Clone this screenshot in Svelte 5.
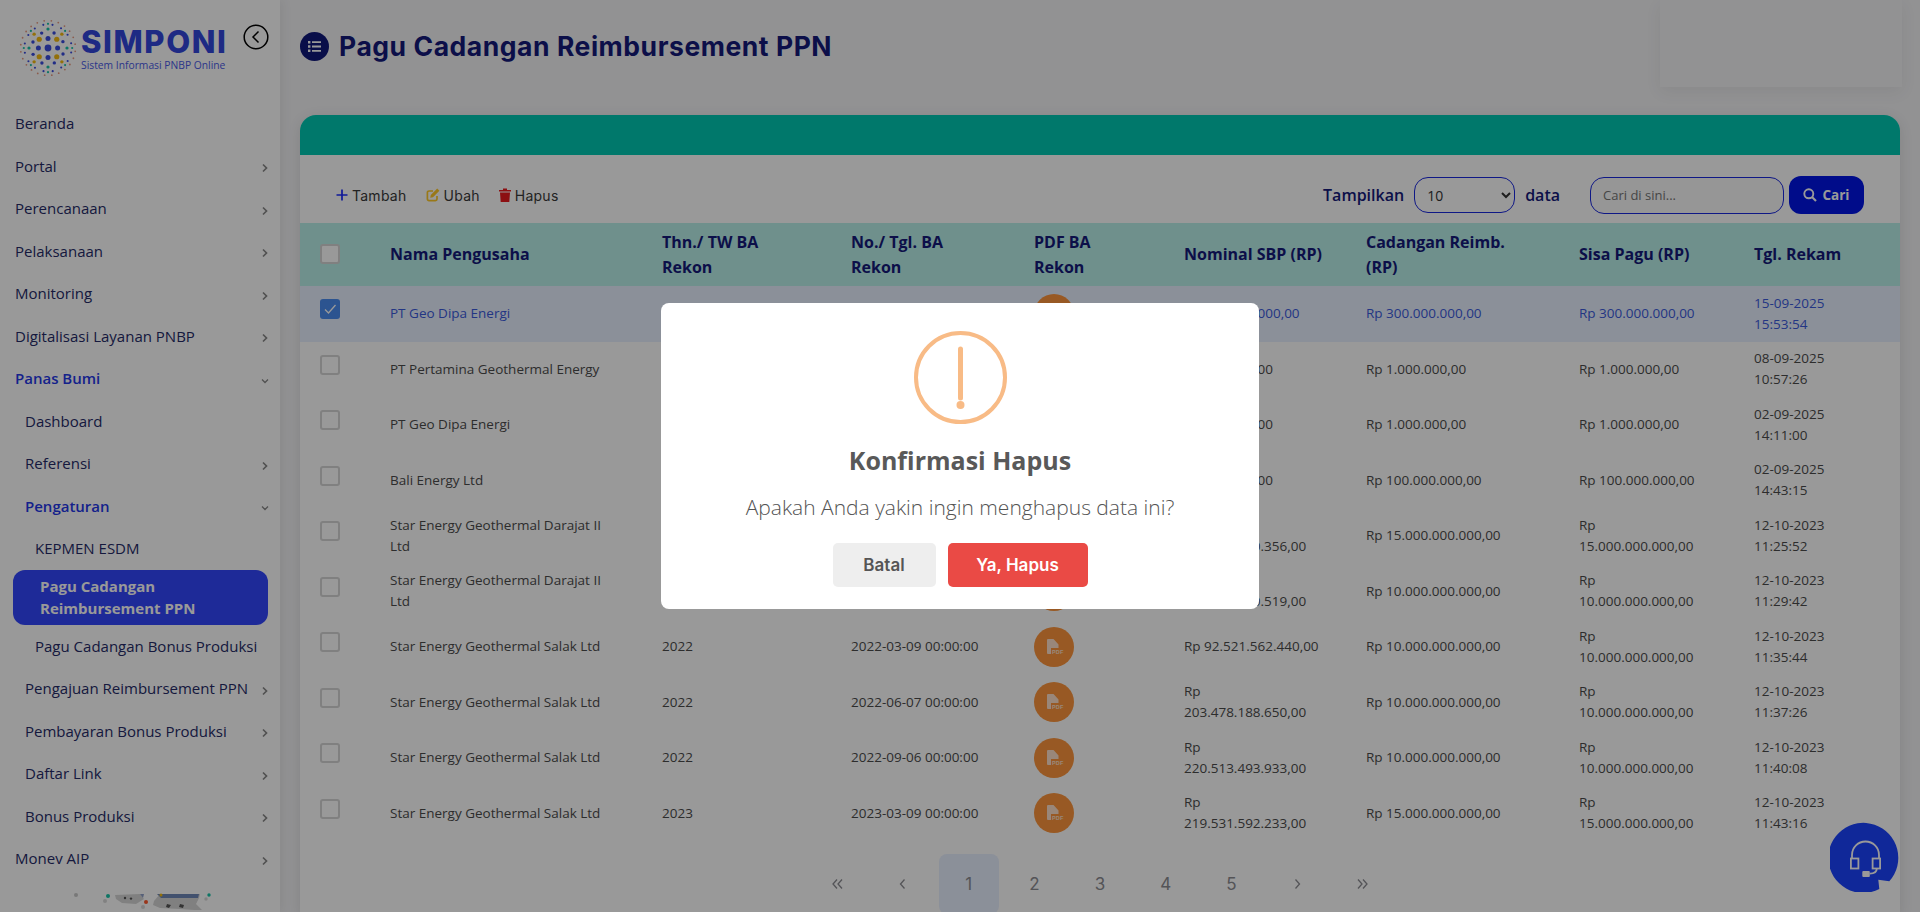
<script>
  const nav = [
    { label: 'Beranda', level: 0 },
    { label: 'Portal', level: 0, arrow: 'right' },
    { label: 'Perencanaan', level: 0, arrow: 'right' },
    { label: 'Pelaksanaan', level: 0, arrow: 'right' },
    { label: 'Monitoring', level: 0, arrow: 'right' },
    { label: 'Digitalisasi Layanan PNBP', level: 0, arrow: 'right' },
    { label: 'Panas Bumi', level: 0, arrow: 'down', open: true },
    { label: 'Dashboard', level: 1 },
    { label: 'Referensi', level: 1, arrow: 'right' },
    { label: 'Pengaturan', level: 1, arrow: 'down', open: true },
    { label: 'KEPMEN ESDM', level: 2 },
    { label: 'Pagu Cadangan Reimbursement PPN', level: 2, active: true },
    { label: 'Pagu Cadangan Bonus Produksi', level: 2 },
    { label: 'Pengajuan Reimbursement PPN', level: 1, arrow: 'right' },
    { label: 'Pembayaran Bonus Produksi', level: 1, arrow: 'right' },
    { label: 'Daftar Link', level: 1, arrow: 'right' },
    { label: 'Bonus Produksi', level: 1, arrow: 'right' },
    { label: 'Monev AIP', level: 0, arrow: 'right' }
  ];

  const rows = [
    { name: 'PT Geo Dipa Energi', thn: '2025', no: '2025-09-15 00:00:00', nominal: 'Rp 300.000.000,00', cad: 'Rp 300.000.000,00', sisa: 'Rp 300.000.000,00', tgl: '15-09-2025 15:53:54', selected: true },
    { name: 'PT Pertamina Geothermal Energy', thn: '2025', no: '2025-09-08 00:00:00', nominal: 'Rp 100.000,00', cad: 'Rp 1.000.000,00', sisa: 'Rp 1.000.000,00', tgl: '08-09-2025 10:57:26' },
    { name: 'PT Geo Dipa Energi', thn: '2025', no: '2025-09-02 00:00:00', nominal: 'Rp 100.000,00', cad: 'Rp 1.000.000,00', sisa: 'Rp 1.000.000,00', tgl: '02-09-2025 14:11:00' },
    { name: 'Bali Energy Ltd', thn: '2025', no: '2025-09-02 00:00:00', nominal: 'Rp 100.000,00', cad: 'Rp 100.000.000,00', sisa: 'Rp 100.000.000,00', tgl: '02-09-2025 14:43:15' },
    { name: 'Star Energy Geothermal Darajat II Ltd', thn: '2022', no: '2022-03-09 00:00:00', nominal: 'Rp 120.000.000.356,00', cad: 'Rp 15.000.000.000,00', sisa: 'Rp 15.000.000.000,00', tgl: '12-10-2023 11:25:52' },
    { name: 'Star Energy Geothermal Darajat II Ltd', thn: '2022', no: '2022-06-07 00:00:00', nominal: 'Rp 110.000.000.519,00', cad: 'Rp 10.000.000.000,00', sisa: 'Rp 10.000.000.000,00', tgl: '12-10-2023 11:29:42' },
    { name: 'Star Energy Geothermal Salak Ltd', thn: '2022', no: '2022-03-09 00:00:00', nominal: 'Rp 92.521.562.440,00', cad: 'Rp 10.000.000.000,00', sisa: 'Rp 10.000.000.000,00', tgl: '12-10-2023 11:35:44' },
    { name: 'Star Energy Geothermal Salak Ltd', thn: '2022', no: '2022-06-07 00:00:00', nominal: 'Rp 203.478.188.650,00', cad: 'Rp 10.000.000.000,00', sisa: 'Rp 10.000.000.000,00', tgl: '12-10-2023 11:37:26' },
    { name: 'Star Energy Geothermal Salak Ltd', thn: '2022', no: '2022-09-06 00:00:00', nominal: 'Rp 220.513.493.933,00', cad: 'Rp 10.000.000.000,00', sisa: 'Rp 10.000.000.000,00', tgl: '12-10-2023 11:40:08' },
    { name: 'Star Energy Geothermal Salak Ltd', thn: '2023', no: '2023-03-09 00:00:00', nominal: 'Rp 219.531.592.233,00', cad: 'Rp 15.000.000.000,00', sisa: 'Rp 15.000.000.000,00', tgl: '12-10-2023 11:43:16' }
  ];

  const pages = ['first', 'prev', '1', '2', '3', '4', '5', 'next', 'last'];
  const arrows = {
    first: 'M7 2.500 3 7l4 4.500M12 2.500 8 7l4 4.500',
    prev: 'M8.500 2.500 4.500 7l4 4.500',
    next: 'M5.500 2.500 9.500 7l-4 4.500',
    last: 'M2 2.500 6 7l-4 4.500M7 2.500 11 7l-4 4.500'
  };

  // logo dots, ring by ring from the middle out
  const rings = [
    { n: 1, d: 0, r: 3.4, c: '#3a4be0', a: 0 },
    { n: 4, d: 9.6, r: 2.5, c: '#3a4be0', a: 0 },
    { n: 4, d: 12.4, r: 2.6, c: '#f5bb10', a: 45 },
    { n: 8, d: 16.2, r: 1.7, c: '#3a4be0', a: 22 },
    { n: 4, d: 19, r: 1.6, c: '#18c4a8', a: 0 },
    { n: 4, d: 19.6, r: 1.7, c: '#f5bb10', a: 45 },
    { n: 16, d: 23.6, r: 1.05, c: '#3a4be0', a: 11 },
    { n: 8, d: 24.2, r: 1.1, c: '#18c4a8', a: 0 },
    { n: 24, d: 27.4, r: 0.9, c: '#e89a80', a: 7 }
  ];
  const dots = rings.flatMap((ring) =>
    Array.from({ length: ring.n }, (_, i) => {
      const t = ((ring.a + (i * 360) / ring.n) * Math.PI) / 180;
      return { x: 30 + ring.d * Math.cos(t), y: 30 + ring.d * Math.sin(t), r: ring.r, c: ring.c };
    })
  );
</script>

<div class="shell">
  <aside>
    <div class="brand">
      <svg class="mark" viewBox="0 0 60 60" width="60" height="60">
        {#each dots as dot}
          <circle cx={dot.x} cy={dot.y} r={dot.r} fill={dot.c} />
        {/each}
      </svg>
      <div class="brand-text">
        <strong>SIMPONI</strong>
        <span>Sistem Informasi PNBP Online</span>
      </div>
      <svg class="back" viewBox="0 0 26 26" width="26" height="26">
        <circle cx="13" cy="13" r="11.800" fill="none" stroke="#000" stroke-width="1.500" />
        <path d="M15.500 7.500 10 13l5.500 5.500" fill="none" stroke="#000" stroke-width="1.500" />
      </svg>
    </div>

    <nav>
      {#each nav as item}
        <div class="item lv{item.level}" class:open={item.open} class:active={item.active}>
          <span>{item.label}</span>
          {#if item.arrow === 'right'}
            <svg class="arrow" viewBox="0 0 8 10" width="8" height="10"><path d="M2 1.500 5.500 5 2 8.500" fill="none" stroke="currentColor" stroke-width="1.700" /></svg>
          {:else if item.arrow === 'down'}
            <svg class="arrow" viewBox="0 0 8 10" width="8" height="10"><path d="M1 3.500 4 6.500l3-3" fill="none" stroke="currentColor" stroke-width="1.300" /></svg>
          {/if}
        </div>
      {/each}
    </nav>

    <svg class="art" viewBox="0 0 170 32" width="170" height="32">
      <circle cx="16" cy="14" r="2" fill="#c8c8c8" />
      <circle cx="48" cy="15" r="2" fill="#18c4a8" />
      <circle cx="45" cy="20" r="2" fill="#d8d8d8" />
      <path d="M55 14 80 13l4 5-8 5-14-1-6-4Z" fill="#d6d6d6" />
      <path d="M80 13l3 4 1-4Z" fill="#8fa0c8" />
      <circle cx="65" cy="17" r="1.200" fill="#555" />
      <circle cx="71" cy="17.600" r="1.200" fill="#555" />
      <circle cx="86" cy="21" r="2" fill="#ff5a30" />
      <circle cx="83" cy="26" r="2" fill="#d8d8d8" />
      <path d="M94 20 100 13h40l-1 4-3 6 6 6h-8l-14-1-20-1-7-3Z" fill="#d6d6d6" />
      <path d="M97 13h42l-1 4h-37Z" fill="#6f88b8" />
      <circle cx="101" cy="14" r="1.500" fill="#f5bb10" />
      <path d="M107 23l4 1-2 3-3-1ZM120 23l4 1-1 3-4-1Z" fill="#555" />
      <circle cx="149" cy="14" r="1.700" fill="#18c4a8" />
      <circle cx="146" cy="18" r="1.700" fill="#d8d8d8" />
    </svg>
  </aside>

  <main>
    <header>
      <div class="title">
        <svg viewBox="0 0 29 29" width="29" height="29">
          <circle cx="14.500" cy="14.500" r="14.500" fill="#10187a" />
          <path d="M8 9h2.400v2.400H8Zm0 4.300h2.400v2.400H8Zm0 4.300h2.400V20H8ZM12 9.300h9v1.800h-9Zm0 4.300h9v1.800h-9Zm0 4.300h9v1.800h-9Z" fill="#fff" />
        </svg>
        <h1>Pagu Cadangan Reimbursement PPN</h1>
      </div>
      <div class="profile"></div>
    </header>

    <section class="card">
      <div class="band"></div>

      <div class="toolbar">
        <div class="actions">
          <span class="act">
            <svg viewBox="0 0 12 12" width="12" height="12"><path d="M6 .5v11M.5 6h11" stroke="#1b2bff" stroke-width="1.700" /></svg>
            Tambah
          </span>
          <span class="act">
            <svg viewBox="0 0 14 14" width="14" height="14">
              <path d="M11 8v3a1.600 1.600 0 0 1-1.600 1.600H3A1.600 1.600 0 0 1 1.400 11V4.600A1.600 1.600 0 0 1 3 3h4" fill="none" stroke="#ffc928" stroke-width="1.700" />
              <path d="M11.200.6 13.400 2.800 7 9.200l-2.800.6.600-2.800Z" fill="#ffc928" />
            </svg>
            Ubah
          </span>
          <span class="act">
            <svg viewBox="0 0 12 14" width="12" height="14">
              <path d="M0 2.100h4V.6h4v1.500h4v1.500H0ZM1 4.600h10l-.7 9.400H1.700Z" fill="#e91a1f" />
            </svg>
            Hapus
          </span>
        </div>

        <div class="filters">
          <label class="show">
            Tampilkan
            <select><option>10</option><option>25</option><option>50</option></select>
            data
          </label>
          <div class="search">
            <input type="text" placeholder="Cari di sini..." />
            <button>
              <svg viewBox="0 0 14 14" width="14" height="14"><circle cx="5.800" cy="5.800" r="4.500" fill="none" stroke="#fff" stroke-width="1.900" /><path d="m9 9 4 4" stroke="#fff" stroke-width="2.200" /></svg>
              Cari
            </button>
          </div>
        </div>
      </div>

      <table>
        <colgroup>
          <col style="width:90px" /><col style="width:272px" /><col style="width:189px" /><col style="width:183px" /><col style="width:150px" /><col style="width:182px" /><col style="width:213px" /><col style="width:175px" /><col style="width:146px" />
        </colgroup>
        <thead>
          <tr>
            <th><span class="check head"></span></th>
            <th>Nama Pengusaha</th>
            <th class="wrap">Thn./ TW BA Rekon</th>
            <th class="wrap">No./ Tgl. BA Rekon</th>
            <th class="wrap narrow">PDF BA Rekon</th>
            <th>Nominal SBP (RP)</th>
            <th class="wrap wide">Cadangan Reimb. (RP)</th>
            <th>Sisa Pagu (RP)</th>
            <th>Tgl. Rekam</th>
          </tr>
        </thead>
        <tbody>
          {#each rows as row}
            <tr class:selected={row.selected}>
              <td>
                <span class="check" class:on={row.selected}>
                  {#if row.selected}
                    <svg viewBox="0 0 20 20" width="20" height="20"><path d="m5 10.500 3.500 3.500L15.500 6" fill="none" stroke="#fff" stroke-width="1.300" /></svg>
                  {/if}
                </span>
              </td>
              <td class="name">{row.name}</td>
              <td>{row.thn}</td>
              <td>{row.no}</td>
              <td>
                <span class="pdf">
                  <svg viewBox="0 0 40 40" width="40" height="40">
                    <path d="M13 13a1 1 0 0 1 1-1h5.500l5 5.500V21H17v6h-3a1 1 0 0 1-1-1Z" fill="#ffe2cc" />
                    <text x="18" y="27" class="pdf-label">PDF</text>
                  </svg>
                </span>
              </td>
              <td class="nominal">{row.nominal}</td>
              <td>{row.cad}</td>
              <td class="sisa">{row.sisa}</td>
              <td class="stamp">{row.tgl}</td>
            </tr>
          {/each}
        </tbody>
      </table>

      <div class="pager">
        {#each pages as page}
          <span class:current={page === '1'}>
            {#if arrows[page]}
              <svg viewBox="0 0 14 14" width="14" height="14"><path d={arrows[page]} fill="none" stroke="currentColor" stroke-width="1.300" /></svg>
            {:else}
              {page}
            {/if}
          </span>
        {/each}
      </div>
    </section>
  </main>

  <div class="fab">
    <svg viewBox="0 0 70 70" width="70" height="70">
      <path d="M49.300 67A35 35 0 1 1 59.300 59.300L48.300 57.700Z" fill="#1c44ff" />
      <g fill="none" stroke="#fff" stroke-width="1.800">
        <path d="M22 37v-4a13.500 13.500 0 0 1 27 0v4" />
        <rect x="20.900" y="36.500" width="7.500" height="10" />
        <rect x="42.600" y="36.500" width="7.500" height="10" />
        <path d="M46.800 46.500c0 3.500-3 5-7 5.200" />
      </g>
      <rect x="32.300" y="49" width="7.500" height="6" rx="1" fill="#fff" />
    </svg>
  </div>
</div>

<div class="overlay">
  <div class="dialog">
    <svg class="warn" viewBox="0 0 93 93" width="93" height="93">
      <circle cx="46.500" cy="46.500" r="44.500" fill="none" stroke="#f8bb86" stroke-width="4" />
      <path d="M46.500 18v49" stroke="#f8bb86" stroke-width="5" stroke-linecap="round" />
      <circle cx="46.500" cy="74" r="4" fill="#f8bb86" />
    </svg>
    <h2>Konfirmasi Hapus</h2>
    <p>Apakah Anda yakin ingin menghapus data ini?</p>
    <div class="buttons">
      <button class="cancel">Batal</button>
      <button class="confirm">Ya, Hapus</button>
    </div>
  </div>
</div>

<style>
  :global(body) {
    margin: 0;
    font-family: "Open Sans", "Liberation Sans", sans-serif;
    color: #14197a;
    overflow: hidden;
  }

  .shell {
    display: flex;
    height: 100vh;
    overflow: hidden;
    background: #f3f3f5;
  }

  aside {
    width: 280px;
    flex: none;
    background: #fff;
    box-shadow: 3px 0 10px rgba(0, 0, 0, 0.06);
    z-index: 1;
  }

  .brand {
    height: 102px;
    box-sizing: border-box;
    padding: 18px 0 0 18px;
    display: flex;
    align-items: flex-start;
  }

  .mark {
    flex: none;
  }

  .brand-text {
    margin: 8px 0 0 3px;
    width: 148px;
    display: flex;
    flex-direction: column;
    white-space: nowrap;
  }

  .brand-text strong {
    font: 800 31px/32px Inter, sans-serif;
    color: #3246dc;
    letter-spacing: 1.600px;
  }

  .brand-text span {
    font-size: 10.300px;
    line-height: 14px;
    color: #4a5ae6;
  }

  .back {
    margin: 6px 0 0 14px;
    flex: none;
  }

  .item {
    height: 42.500px;
    display: flex;
    align-items: center;
    justify-content: space-between;
    box-sizing: border-box;
    padding-right: 11px;
    font-size: 15px;
    color: #262b68;
  }

  .lv0 { padding-left: 15px; }
  .lv1 { padding-left: 25px; }
  .lv2 { padding-left: 35px; }

  .item.open {
    color: #2438e8;
    font-weight: 600;
  }

  .item.active {
    height: 55px;
    margin: 0 12px 0 13px;
    padding: 0 20px 0 27px;
    background: #3246fd;
    border-radius: 12px;
    color: #fff;
    font-weight: 700;
    line-height: 22px;
  }

  .arrow {
    color: #888;
    margin-top: 5px;
    flex: none;
  }

  .art {
    display: block;
    margin: 1px 0 0 60px;
  }

  main {
    flex: 1;
    min-width: 0;
    padding: 0 20px;
  }

  header {
    height: 115px;
    display: flex;
    justify-content: space-between;
    align-items: flex-start;
  }

  .title {
    margin-top: 32px;
    display: flex;
    align-items: center;
    gap: 10px;
  }

  h1 {
    margin: 0;
    font: 700 26.500px/29px Inter, sans-serif;
    letter-spacing: 0.550px;
    color: #14197a;
  }

  .profile {
    width: 242px;
    height: 87px;
    margin-right: -2px;
    background: #f3f3f5;
    box-shadow: 0 5px 16px rgba(0, 0, 0, 0.06);
  }

  .card {
    background: #fff;
    border-radius: 16px 16px 0 0;
    box-shadow: 0 3px 14px rgba(0, 0, 0, 0.1);
  }

  .band {
    height: 40px;
    background: #00c8b2;
    border-radius: 16px 16px 0 0;
  }

  .toolbar {
    height: 68px;
    box-sizing: border-box;
    padding: 12px 36px 0;
    display: flex;
    justify-content: space-between;
    align-items: center;
  }

  .actions {
    display: flex;
    gap: 19px;
    font: 400 14px Inter, sans-serif;
    letter-spacing: 0.250px;
    color: #3a3a3a;
  }

  .act {
    display: flex;
    align-items: center;
    gap: 4px;
  }

  .filters {
    display: flex;
    align-items: center;
    gap: 30px;
  }

  .show {
    display: flex;
    align-items: center;
    gap: 10px;
    font-size: 16px;
    font-weight: 600;
  }

  select {
    width: 101px;
    height: 36px;
    padding-left: 8px;
    border: 1px solid #1a28e0;
    border-radius: 14px;
    background: transparent;
    font: 14px "Open Sans", sans-serif;
    color: #333;
  }

  .search {
    display: flex;
    align-items: center;
    gap: 5px;
  }

  input {
    width: 194px;
    height: 37px;
    box-sizing: border-box;
    padding: 0 12px;
    border: 1px solid #1a28e0;
    border-radius: 14px;
    background: #fafafa;
    font: 13px "Open Sans", sans-serif;
  }

  .search button {
    width: 75px;
    height: 38px;
    display: flex;
    align-items: center;
    justify-content: center;
    gap: 5px;
    border: 0;
    border-radius: 12px;
    background: #0014e6;
    color: #fff;
    font: 700 13.500px "Open Sans", sans-serif;
  }

  table {
    width: 100%;
    table-layout: fixed;
    border-collapse: collapse;
    font-size: 13.500px;
    line-height: 21px;
    color: #4c4c4c;
  }

  th {
    height: 63px;
    padding: 0;
    text-align: left;
    background: #b9f0e9;
    color: #14197a;
    font-size: 16px;
    line-height: 25px;
    font-weight: 700;
  }

  th.wrap { padding-right: 40px; }
  th.narrow { padding-right: 80px; }
  th.wide { padding-right: 50px; }

  td {
    height: 55.500px;
    padding: 0;
  }

  .nominal { padding-right: 44px; }
  .sisa { padding-right: 50px; }
  .stamp { padding-right: 60px; }
  .name { padding-right: 48px; }

  tr.selected td {
    background: #e8f0ff;
    color: #3b5bdc;
  }

  .check {
    display: block;
    width: 20px;
    height: 20px;
    box-sizing: border-box;
    margin: 0 0 9px 20px;
    border: 2px solid #d5d5d5;
    border-radius: 3px;
    background: #fff;
  }

  .check.head {
    margin-bottom: 2px;
  }

  .check.on {
    border: 0;
    background: #4a8cf0;
  }

  .check svg {
    display: block;
  }

  .pdf {
    display: block;
    width: 40px;
    height: 40px;
    border-radius: 50%;
    background: #fe953c;
  }

  .pdf svg {
    display: block;
  }

  .pdf-label {
    font: 700 5.500px "Liberation Sans", sans-serif;
    fill: #ffe2cc;
    letter-spacing: 0.200px;
  }

  .pager {
    margin-top: 13px;
    display: flex;
    justify-content: center;
    gap: 5.700px;
    font: 400 17px Inter, sans-serif;
    color: #8c8c92;
  }

  .pager span {
    width: 60px;
    height: 60px;
    display: flex;
    align-items: center;
    justify-content: center;
    border-radius: 8px;
  }

  .pager .current {
    background: #e8f0ff;
  }

  .fab {
    position: fixed;
    right: 20px;
    bottom: 20px;
    width: 70px;
    height: 70px;
  }

  .fab svg {
    display: block;
  }

  .overlay {
    position: fixed;
    inset: 0;
    z-index: 5;
    display: flex;
    align-items: center;
    justify-content: center;
    background: rgba(0, 0, 0, 0.4);
  }

  .dialog {
    width: 598px;
    height: 306px;
    box-sizing: border-box;
    padding-top: 28px;
    display: flex;
    flex-direction: column;
    align-items: center;
    background: #fff;
    border-radius: 8px;
  }

  .warn {
    display: block;
    flex: none;
  }

  h2 {
    margin: 18px 0 0;
    font-size: 25px;
    line-height: 36px;
    font-weight: 700;
    color: #595959;
  }

  .dialog p {
    margin: 13px 0 0;
    font-size: 21px;
    line-height: 32px;
    font-weight: 300;
    color: #545454;
  }

  .buttons {
    margin-top: 20px;
    display: flex;
    gap: 12px;
  }

  .buttons button {
    height: 44px;
    border: 0;
    border-radius: 5px;
    font: 600 17px Inter, sans-serif;
  }

  .cancel {
    width: 103px;
    background: #eee;
    color: #555;
  }

  .confirm {
    width: 140px;
    background: #ea4a45;
    color: #fff;
  }
</style>
